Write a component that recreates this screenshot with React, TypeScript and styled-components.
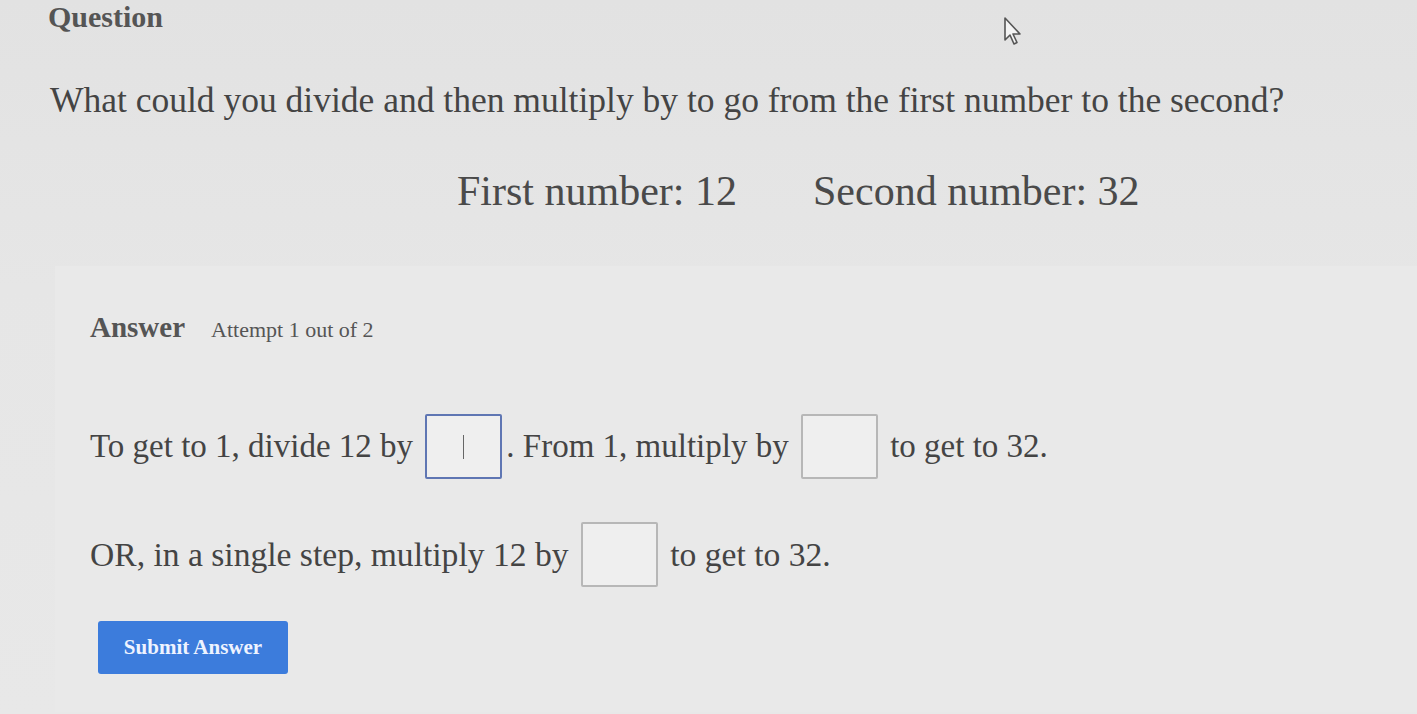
import React from "react";
import styled, { createGlobalStyle } from "styled-components";

const GlobalStyle = createGlobalStyle`
  html, body {
    margin: 0;
    padding: 0;
    background: #e3e3e3;
  }
  body {
    font-family: "Liberation Serif", "DejaVu Serif", serif;
    color: #4b4b4b;
  }
`;

const Page = styled.div`
  position: relative;
  width: 1417px;
  height: 714px;
  overflow: hidden;
  background: linear-gradient(to bottom, #e2e2e2 0%, #e6e6e6 40%, #e8e8e8 100%);
`;

const Header = styled.div`
  padding: 0 0 0 48px;
  font-size: 30px;
  font-weight: bold;
  line-height: 34px;
  color: #555;
`;

const Prompt = styled.h1`
  margin: 46px 0 0 50px;
  font-size: 35.5px;
  font-weight: normal;
  line-height: 40px;
  color: #444;
  white-space: nowrap;
`;

const Numbers = styled.div`
  display: flex;
  gap: 76px;
  margin: 47px 0 0 457px;
  font-size: 42px;
  line-height: 48px;
  color: #4a4a4a;
`;

const Panel = styled.section`
  margin: 51px 0 0 55px;
  padding: 45px 0 0 35px;
  height: 401px;
  background: #e9e9e9;
`;

const AnswerHead = styled.div`
  display: flex;
  align-items: baseline;
  gap: 26px;
  line-height: 32px;
  color: #555;
`;

const AnswerTitle = styled.span`
  font-size: 29px;
  font-weight: bold;
`;

const Attempt = styled.span`
  font-size: 22px;
`;

const Line = styled.div<{ $top: number; $size: number }>`
  display: flex;
  align-items: center;
  margin-top: ${(p) => p.$top}px;
  font-size: ${(p) => p.$size}px;
  color: #444;
  white-space: pre;
`;

const Box = styled.span<{ $focused?: boolean }>`
  display: inline-flex;
  align-items: center;
  justify-content: center;
  width: 77px;
  height: 65px;
  margin: 0 4px;
  background: #efefef;
  border: 2px solid ${(p) => (p.$focused ? "#5f76b3" : "#b7b7b7")};
  border-radius: 2px;
  box-sizing: border-box;
`;

const Caret = styled.span`
  width: 1px;
  height: 24px;
  background: #666;
`;

const Submit = styled.button`
  display: block;
  margin: 34px 0 0 8px;
  width: 190px;
  height: 53px;
  border: none;
  border-radius: 3px;
  background: #3c7cdc;
  color: #eef3ff;
  font-family: "Liberation Serif", serif;
  font-size: 21px;
  font-weight: bold;
  cursor: pointer;
`;

const Pointer = styled.svg`
  position: absolute;
  left: 1003px;
  top: 16px;
`;

export default function App() {
  return (
    <Page>
      <GlobalStyle />
      <Header>Question</Header>
      <Prompt>
        What could you divide and then multiply by to go from the first number to the second?
      </Prompt>
      <Numbers>
        <span>First number: 12</span>
        <span>Second number: 32</span>
      </Numbers>
      <Panel>
        <AnswerHead>
          <AnswerTitle>Answer</AnswerTitle>
          <Attempt>Attempt 1 out of 2</Attempt>
        </AnswerHead>
        <Line $top={68} $size={33}>
          {"To get to 1, divide 12 by "}
          <Box $focused>
            <Caret />
          </Box>
          {". From 1, multiply by "}
          <Box />
          {" to get to 32."}
        </Line>
        <Line $top={43} $size={33.6}>
          {"OR, in a single step, multiply 12 by "}
          <Box />
          {" to get to 32."}
        </Line>
        <Submit>Submit Answer</Submit>
      </Panel>
      <Pointer width="22" height="30" viewBox="0 0 22 30">
        <path
          d="M2 2 L2 24 L7 19 L11 28 L14 26.5 L10 18 L17 18 Z"
          fill="#f4f4f4"
          stroke="#555"
          strokeWidth="1.6"
          strokeLinejoin="round"
        />
      </Pointer>
    </Page>
  );
}
